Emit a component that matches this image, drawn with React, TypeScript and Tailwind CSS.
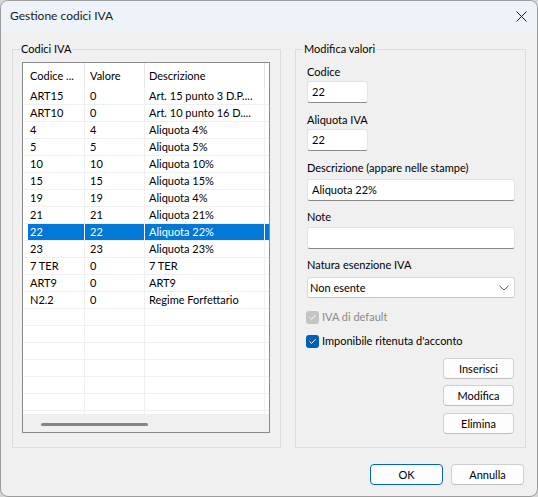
import React from "react";

const rows: [string, string, string][] = [
  ["ART15", "0", "Art. 15 punto 3 D.P...."],
  ["ART10", "0", "Art. 10 punto 16 D...."],
  ["4", "4", "Aliquota 4%"],
  ["5", "5", "Aliquota 5%"],
  ["10", "10", "Aliquota 10%"],
  ["15", "15", "Aliquota 15%"],
  ["19", "19", "Aliquota 4%"],
  ["21", "21", "Aliquota 21%"],
  ["22", "22", "Aliquota 22%"],
  ["23", "23", "Aliquota 23%"],
  ["7 TER", "0", "7 TER"],
  ["ART9", "0", "ART9"],
  ["N2.2", "0", "Regime Forfettario"],
];

const SELECTED = 8;
const EMPTY_ROWS = 8;

function ListRow({ cells, selected }: { cells: string[]; selected?: boolean }) {
  const sel = selected ? "bg-[#0078d7] text-white border-white" : "border-[#f0f0f0]";
  return (
    <div className="flex h-[17px] shrink-0 border-b border-[#f0f0f0] pl-[5px] leading-[16px]">
      <div className={`w-[57px] shrink-0 overflow-hidden whitespace-nowrap border-r pl-[2px] ${sel}`}>
        {cells[0]}
      </div>
      <div className={`w-[60px] shrink-0 overflow-hidden whitespace-nowrap border-r pl-[5px] ${sel}`}>
        {cells[1]}
      </div>
      <div className={`w-[120px] shrink-0 overflow-hidden whitespace-nowrap border-r pl-[4px] ${sel}`}>
        {cells[2]}
      </div>
      <div className={`flex-1 ${selected ? "bg-[#0078d7]" : ""}`} />
    </div>
  );
}

function CodesList() {
  return (
    <div className="flex h-[371px] w-[248px] flex-col border border-[#8a8a8a] bg-white">
      <div className="flex h-[25px] shrink-0 items-center pl-[5px]">
        <div className="flex h-full w-[57px] shrink-0 items-center border-r border-[#e5e5e5] pl-[2px]">
          Codice ...
        </div>
        <div className="flex h-full w-[60px] shrink-0 items-center border-r border-[#e5e5e5] pl-[5px]">
          Valore
        </div>
        <div className="flex h-full w-[120px] shrink-0 items-center border-r border-[#e5e5e5] pl-[4px]">
          Descrizione
        </div>
        <div className="flex-1" />
      </div>
      <div className="flex h-[326px] shrink-0 flex-col overflow-hidden">
        {rows.map((r, i) => (
          <ListRow key={r[0]} cells={r} selected={i === SELECTED} />
        ))}
        {Array.from({ length: EMPTY_ROWS }).map((_, i) => (
          <ListRow key={"e" + i} cells={["", "", ""]} />
        ))}
      </div>
      <div className="flex-1 bg-[#f0f0f0] pt-[9px]">
        <div className="ml-[18px] h-[3px] w-[107px] rounded-full bg-[#868686]" />
      </div>
    </div>
  );
}

function TextBox({ value, wide }: { value: string; wide?: boolean }) {
  return (
    <div
      className={`mt-[1px] flex h-[22px] items-center rounded-[3px] border border-[#e3e3e3] border-b-[#8a8a8a] bg-white pl-[4px] ${
        wide ? "w-[208px]" : "w-[61px]"
      }`}
    >
      {value}
    </div>
  );
}

function Check({ disabled }: { disabled?: boolean }) {
  return (
    <span
      className={`flex h-[13px] w-[13px] items-center justify-center rounded-[3px] ${
        disabled ? "bg-[#c4c4c4]" : "bg-[#005fb8]"
      }`}
    >
      <svg width="9" height="9" viewBox="0 0 9 9" fill="none">
        <path d="M1.8 4.7 L3.6 6.4 L7.2 2.6" stroke="white" strokeWidth="1" strokeLinecap="round" strokeLinejoin="round" />
      </svg>
    </span>
  );
}

function Btn({ label, primary, className = "" }: { label: string; primary?: boolean; className?: string }) {
  return (
    <button
      className={`flex h-[21px] w-[71px] items-center justify-center rounded-[4px] border bg-[#fdfdfd] leading-none text-black ${
        primary ? "border-[#0067c0]" : "border-[#d0d0d0] border-b-[#bdbdbd]"
      } ${className}`}
    >
      {label}
    </button>
  );
}

export default function App() {
  return (
    <div className="h-[497px] w-[538px] bg-[#d6d6d6] font-['Lato','Noto_Sans',sans-serif] text-[11px] leading-[16px] text-black">
      <div className="flex h-full flex-col overflow-hidden rounded-[8px] border border-[#9c9c9c] bg-[#f0f0f0]">
        <div className="flex h-[30px] shrink-0 items-center bg-[#eef3f9] pl-[9px] pr-[10px]">
          <span className="text-[12px] text-[#1a1a1a]">Gestione codici IVA</span>
          <svg className="ml-auto" width="11" height="11" viewBox="0 0 11 11">
            <path d="M0.5 0.5 L10.5 10.5 M10.5 0.5 L0.5 10.5" stroke="#1a1a1a" strokeWidth="1" />
          </svg>
        </div>

        <div className="flex flex-1 flex-col px-[11px] pt-[10px]">
          <div className="flex gap-[14px]">
            <fieldset className="h-[407px] w-[269px] border border-[#dcdcdc] pl-[9px] pt-[5px]">
              <legend className="-ml-[2px] px-[1px] leading-[16px]">Codici IVA</legend>
              <CodesList />
            </fieldset>

            <fieldset className="flex h-[407px] w-[231px] flex-col border border-[#dcdcdc] pl-[11px] pr-[10px] pt-[7px]">
              <legend className="-ml-[4px] px-[1px] leading-[16px]">Modifica valori</legend>
              <div>Codice</div>
              <TextBox value="22" />
              <div className="mt-[9px]">Aliquota IVA</div>
              <TextBox value="22" />
              <div className="mt-[9px]">Descrizione (appare nelle stampe)</div>
              <div className="mt-[2px]">
                <TextBox value="Aliquota 22%" wide />
              </div>
              <div className="mt-[8px]">Note</div>
              <div className="mt-[1px]">
                <TextBox value="" wide />
              </div>
              <div className="mt-[8px]">Natura esenzione IVA</div>
              <div className="mt-[4px] flex h-[21px] w-[208px] items-center rounded-[3px] border border-[#d9d9d9] border-b-[#c4c4c4] bg-white pl-[2px] pr-[5px]">
                <span>Non esente</span>
                <svg className="ml-auto" width="10" height="6" viewBox="0 0 10 6" fill="none">
                  <path d="M0.5 0.8 L5 5 L9.5 0.8" stroke="#5f5f5f" strokeWidth="1" />
                </svg>
              </div>
              <div className="-ml-[1px] mt-[11px] flex h-[16px] items-center gap-[3px] text-[#8a8a8a]">
                <Check disabled />
                <span>IVA di default</span>
              </div>
              <div className="-ml-[1px] mt-[8px] flex h-[16px] items-center gap-[3px]">
                <Check />
                <span>Imponibile ritenuta d'acconto</span>
              </div>
              <div className="mt-[9px] flex flex-col items-end pr-[1px]">
                <Btn label="Inserisci" />
                <Btn label="Modifica" className="mt-[6px]" />
                <Btn label="Elimina" className="mt-[7px]" />
              </div>
            </fieldset>
          </div>

          <div className="mt-[16px] flex justify-end gap-[8px] pr-[2px]">
            <Btn label="OK" primary className="w-[73px]" />
            <Btn label="Annulla" className="w-[73px]" />
          </div>
        </div>
      </div>
    </div>
  );
}
